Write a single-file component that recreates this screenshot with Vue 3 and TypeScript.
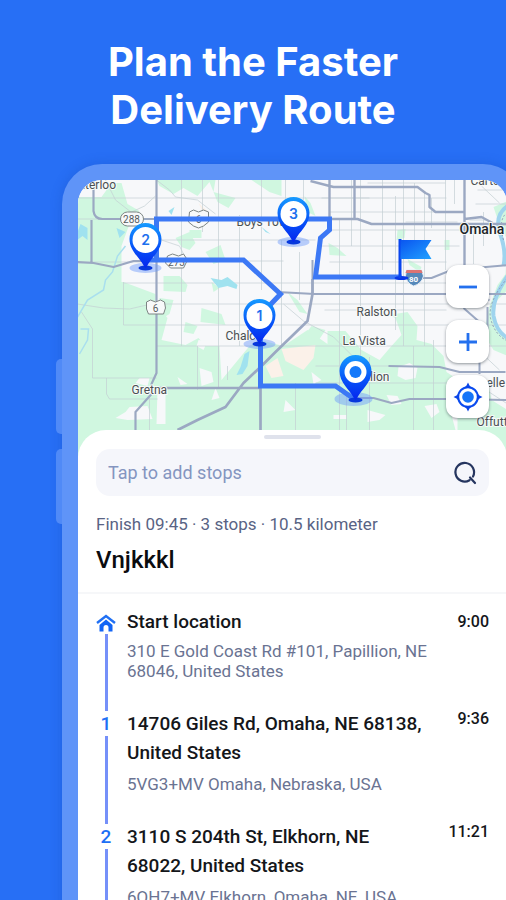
<script setup lang="ts">
import { ref } from 'vue'

interface Stop {
  marker: string
  title: string
  address: string
  time: string
}

interface Pin {
  x: number
  y: number
  label: string
}

const query = ref('')

const stops: Stop[] = [
  { marker: 'home', title: 'Start location', address: '310 E Gold Coast Rd #101, Papillion, NE 68046, United States', time: '9:00' },
  { marker: '1', title: '14706 Giles Rd, Omaha, NE 68138, United States', address: '5VG3+MV Omaha, Nebraska, USA', time: '9:36' },
  { marker: '2', title: '3110 S 204th St, Elkhorn, NE 68022, United States', address: '6QH7+MV Elkhorn, Omaha, NE, USA', time: '11:21' },
]

const pins: Pin[] = [
  { x: 146, y: 240, label: '2' },
  { x: 294, y: 214, label: '3' },
  { x: 260, y: 316, label: '1' },
  { x: 356, y: 372, label: '' },
]
</script>

<template>
  <main class="poster">
    <h1 class="headline">Plan the Faster<br />Delivery Route</h1>

    <div class="phone">
      <span class="side-key side-key-up"></span>
      <span class="side-key side-key-down"></span>
      <div class="screen">
        <section class="map-area" aria-label="Route map">
          <svg class="map" viewBox="78 180 430 276" preserveAspectRatio="xMidYMin slice">
            <defs>
              <linearGradient id="pinFill" x1="0" y1="0" x2="0" y2="1">
                <stop offset="0" stop-color="#169bff" />
                <stop offset="0.55" stop-color="#0752f8" />
                <stop offset="1" stop-color="#0525ee" />
              </linearGradient>
              <linearGradient id="flagFill" x1="0" y1="0" x2="1" y2="1">
                <stop offset="0" stop-color="#0a55f0" />
                <stop offset="1" stop-color="#21a1ff" />
              </linearGradient>
            </defs>
            <rect x="78" y="180" width="430" height="276" fill="#f7f8fa" />

            <g fill="#d0f7e0">
              <path d="M78 197H102L112 183H122L128 204 140 211 130 224 122 246V282H124L156 294V304L168 318 162 340 186 345 199 338 206 346H220L222 380 250 346 260 340 284 346 308 330 328 344V331H346L362 350 380 360 392 346 402 335 396 318 389 315 408 312 418 326 417 340 432 344 444 356 447 372 456 378 448 400 456 430 447 456H78Z" />
              <path d="M157 180H216L214 192 236 198 229 208 218 202 210 182 198 196 184 188 174 194 160 186Z" />
              <path d="M252 180H282V196L270 192 264 188Z" />
              <path d="M305 196L311 203 316 216 308 212ZM329 243L338 248 347 256 330 255ZM398 230L406 229 405 238 397 240ZM445 240H450V250H445ZM408 259L422 267 420 272 410 265Z" />
              <path d="M176 238L190 232 196 243 190 250 182 247ZM206 252L221 245 226 260 214 264ZM190 230H202V238H190ZM164 276H180L188 285 186 292 164 291ZM212 282L220 288 214 292Z" />
              <path d="M160 298L174 300 170 314 160 320ZM202 308L222 314 226 325 201 322ZM186 322 198 326 194 334 184 332ZM288 292 298 300 308 314 300 312ZM312 326 326 330 318 342 306 334Z" />
              <path d="M494 207L508 201V290L496 302 492 316 498 330 508 339V356L494 350 484 334 490 306 498 285 506 274 508 240 500 225Z" />
              <path d="M458 380H488L492 400 508 410V456H458Z" />
            </g>
            <g fill="#f7f8fa">
              <path d="M200 368L212 372 214 382 202 386ZM199 340 208 341 204 350 197 346ZM178 377L188 384 181 385ZM116 418L126 412 130 407 148 406 153 419 128 420ZM158 390H166V424H157ZM140 378H150L148 386 136 383ZM216 388 220 398 212 400Z" />
              <path d="M399 367L410 363 418 368 416 378 406 380 398 376ZM425 406L437 404 440 412 432 418ZM334 415H347V419H334ZM368 410L386 415 380 420 368 422ZM387 395 398 396 402 404 392 405ZM312 372 322 380 314 384ZM286 400 296 410 284 412ZM458 346 480 358 468 370 455 360Z" />
            </g>
            <g fill="#fbf1e9">
              <path d="M282 349L316 345 314 358 304 370 286 361ZM266 366L278 358 284 376 272 378ZM199 203 209 212 204 214Z" />
            </g>

            <g class="streets">
              <path d="M78 198H370M78 219H330M162 240H316M162 261H284M124 283H447M162 304H508M124 325H508M157 346H508M316 366H392M78 262H157M182 180V346M203 180V232M219 180V387M240 215V346M262 180V290M286 180V204M282 240V346M300 252V300M340 220V456M361 180V370M383 180V270M404 180V346M425 192V346M446 180V270M219 366V387M198 346V390" />
              <path d="M124 282V325M78 304L104 308 130 309 156 303M82 312L93 329V378H157M107 378V394L110 399H158M304 180V200M352 180V246M396 196V330M415 183V245M432 198V228M455 180V204M322 198H447M330 212H440M330 230H466M322 246H460M330 262H447M340 294H447M325 310H447M316 383H447M414 346V430M434 340V456M370 357V456M347 394V456M219 387V346M150 394V430M296 383V430M228 366V380M368 183H446M406 222H458" />
              <path d="M106 180L116 200 134 214 141 231M157 180 170 190 176 197 198 200 216 214M128 214 145 206 156 196M162 240 180 246 184 254M284 304 304 321 334 337 352 355M464 345 484 355 500 370M464 386H494M468 378 508 404M476 204H508M478 190H508M482 186 500 203M470 220H488M474 230V264M484 212V246" />
            </g>
            <g fill="none" stroke="#a9dfee" stroke-width="1.5">
              <path d="M126 246L118 256 113 272 106 280 104 290 88 300 78 317" />
              <path d="M81 329L89 329 88 340 80 354" />
            </g>
            <g fill="#a0e2ef">
              <path d="M81 224L88 228 88 240 83 236 78 240V232ZM117 228 126 232 120 238ZM169 211 175 207 172 215ZM211 278L222 280 228 277 233 281 238 285 237 289 228 286 219 288ZM245 354L250 351 248 366 243 374 237 375 241 367ZM262 227 271 234 266 232Z" />
            </g>
            <path d="M508 206Q494 216 501 235Q507 252 504 266M508 276Q492 299 494 316Q497 332 508 338" fill="none" stroke="#9fd4ee" stroke-width="4" />
            <path d="M508 212Q498 220 504 240M508 278Q488 302 491 318Q495 335 508 341" fill="none" stroke="#8b9cb9" stroke-width="1" stroke-dasharray="2 2" />

            <g class="highways">
              <path d="M94 180V211Q95 219 103 219H160M92 220V263M78 262L94 263 114 267 134 261H156M157 180V373L152 384V394L136 412V430" stroke-width="2.2" />
              <path d="M160 388H262M261 340V456M178 430L198 420 226 407 244 383 262 366 276 352 308 321 313 294V279" stroke-width="2.7" />
              <path d="M311 181L334 187H418L426 193 430 195V207L436 212H464M330 180V218M355 180V219M332 219H358L372 224H508M465 180V270M465 219 482 217 493 223" stroke-width="2.4" />
              <path d="M278 292L315 294H508M414 278H432L452 270 508 265M313 260V294M356 398H374L392 403 410 399H450M389 366 440 367 460 372H506M464 308 480 322V374M488 307V333M450 399 508 400M462 294 490 300" stroke-width="2" />
            </g>

            <g class="shields">
              <rect x="121" y="212" width="23" height="14" rx="7" />
              <path d="M190 212L194 210 199 212 204 210 209 212V222L204 226 199 228 194 226 189 222Z" />
              <path d="M168 256L173 254 179 256 184 254 188 260 184 268H171L166 263Z" />
              <path d="M147 302L151 300 156 302 161 300 165 302 166 308 164 314H149L147 309Z" />
              <g class="shield-text">
                <text x="132" y="223">288</text>
                <text x="199" y="223">6</text>
                <text x="177" y="266">273</text>
                <text x="156" y="312">6</text>
              </g>
            </g>
            <g class="places">
              <text x="79" y="189">aterloo</text>
              <text x="237" y="226">Boys Town</text>
              <text x="471" y="185">Carter</text>
              <text x="460" y="234" class="city">Omaha</text>
              <text x="357" y="316">Ralston</text>
              <text x="343" y="345">La Vista</text>
              <text x="344" y="381">Papillion</text>
              <text x="226" y="340">Chalco</text>
              <text x="132" y="394">Gretna</text>
              <text x="487" y="387">elle</text>
              <text x="477" y="426">Offutt</text>
            </g>

            <g fill="#6996fa" fill-opacity="0.45">
              <ellipse cx="146" cy="268" rx="16" ry="5" />
              <ellipse cx="294" cy="242" rx="16" ry="5" />
              <ellipse cx="260" cy="344" rx="16" ry="5" />
              <ellipse cx="354" cy="399" rx="19" ry="7" />
            </g>
            <path class="route" d="M146 260H244L281 294 261 315V386H336L356 400M157 260V219H330V230L321 238 316 277H402" />

            <g>
              <path d="M407 270H422L424 276Q422 284 414 286Q407 283 406 276Z" fill="#5689ba" stroke="#e4edf6" />
              <path d="M407 270H422L423 273H406Z" fill="#dc7373" />
              <text x="414" y="282" class="interstate">80</text>
            </g>

            <g>
              <ellipse cx="402" cy="278" rx="7" ry="2" fill="#0837e8" />
              <path d="M399 239H402V278H399Z" fill="#0845ef" />
              <path d="M401 240H432L426 249 432 259H401Z" fill="url(#flagFill)" />
            </g>

            <g v-for="pin in pins" :key="pin.label" :transform="`translate(${pin.x} ${pin.y})`">
              <ellipse cx="0" cy="28" rx="7" ry="2.5" fill="#0738dc" />
              <path d="M0-17C-9-17-16-10-16-1C-16 11-6 17-1 27Q0 29 1 27C6 17 16 11 16-1C16-10 9-17 0-17Z" fill="url(#pinFill)" />
              <circle :r="pin.label ? 13 : 11" cy="0" fill="#ffffff" />
              <text v-if="pin.label" y="5" class="pin-label">{{ pin.label }}</text>
              <circle v-else r="6" fill="#1479fa" />
            </g>
          </svg>

          <div class="map-controls">
            <button type="button" class="map-button" aria-label="Zoom out">
              <svg viewBox="0 0 24 24"><path d="M3 12H21" stroke="#2470ee" stroke-width="2.8" /></svg>
            </button>
            <button type="button" class="map-button" aria-label="Zoom in">
              <svg viewBox="0 0 24 24"><path d="M3 12H21M12 3V21" stroke="#2470ee" stroke-width="2.8" /></svg>
            </button>
            <button type="button" class="map-button" aria-label="My location">
              <svg class="locate" viewBox="0 0 30 30">
                <circle cx="15" cy="15" r="9.8" fill="none" stroke="#0a4cf0" stroke-width="2" />
                <circle cx="15" cy="15" r="5.8" fill="#1675f8" />
                <path d="M15 0.5L16.5 3.5 19 6H11L13.5 3.5ZM15 29.5L13.5 26.5 11 24H19L16.5 26.5ZM0.5 15L3.5 13.5 6 11V19L3.5 16.5ZM29.5 15L26.5 16.5 24 19V11L26.5 13.5Z" fill="#0a45e8" />
              </svg>
            </button>
          </div>
        </section>

        <section class="sheet">
          <div class="handle"></div>
          <label class="search">
            <input v-model="query" type="text" placeholder="Tap to add stops" aria-label="Tap to add stops" />
            <svg class="search-icon" viewBox="0 0 24 24" fill="none" stroke="#25355f" stroke-width="2.2">
              <path d="M16.5 19.2A9.3 9.3 0 1 1 20 15.5M17 16.5L22 22" stroke-linecap="round" />
            </svg>
          </label>
          <header class="summary">
            <p class="meta">Finish 09:45 · 3 stops · 10.5 kilometer</p>
            <h2 class="route-name">Vnjkkkl</h2>
          </header>
          <ol class="timeline">
            <li v-for="stop in stops" :key="stop.marker" class="stop" :class="{ 'stop-start': stop.marker === 'home' }">
              <div class="rail">
                <span class="marker">
                  <svg v-if="stop.marker === 'home'" viewBox="0 0 20 18" class="home-icon">
                    <path d="M1 9L10 2L19 9" fill="none" stroke="#2070f4" stroke-width="2.4" />
                    <path d="M10 5.5L16.5 11V17.5H12.5V13.5A2.5 2.5 0 0 0 7.5 13.5V17.5H3.5V11Z" fill="#1265f5" />
                  </svg>
                  <template v-else>{{ stop.marker }}</template>
                </span>
                <span class="line"></span>
              </div>
              <div class="stop-body">
                <h3 class="stop-title">{{ stop.title }}</h3>
                <p class="stop-address">{{ stop.address }}</p>
              </div>
              <time class="stop-time">{{ stop.time }}</time>
            </li>
          </ol>
        </section>
      </div>
    </div>
  </main>
</template>

<style>
body {
  margin: 0;
  background: #276ff5;
}
</style>

<style scoped>
.poster {
  box-sizing: border-box;
  height: 100vh;
  overflow: hidden;
  padding-top: 38px;
  background: #276ff5;
  font-family: Roboto, "Liberation Sans", sans-serif;
}

.headline {
  margin: 0;
  color: #ffffff;
  font-family: Inter, Roboto, sans-serif;
  font-size: 40px;
  font-weight: 700;
  line-height: 48px;
  text-align: center;
}

.phone {
  position: relative;
  margin: 30px -17px 0 62px;
  padding: 16px 16px 0;
  border-radius: 40px 40px 0 0;
  background: #5f94f8;
  box-shadow: 0 0 12px rgba(20, 70, 180, 0.3);
}

.side-key {
  position: absolute;
  left: -6px;
  width: 6px;
  height: 75px;
  border-radius: 5px 0 0 5px;
  background: #508af7;
}

.side-key-up {
  top: 195px;
}

.side-key-down {
  top: 285px;
}

.screen {
  overflow: hidden;
  border-radius: 24px 24px 0 0;
  background: #ffffff;
}

.map-area {
  position: relative;
  height: 276px;
}

.map {
  display: block;
  width: 100%;
  height: 100%;
}

.streets {
  fill: none;
  stroke: #c3ced3;
  stroke-opacity: 0.7;
  stroke-width: 1;
}

.highways {
  fill: none;
  stroke: #9ba8c2;
  stroke-linejoin: round;
}

.shields {
  fill: #f8f9fa;
  stroke: #7d8584;
  stroke-width: 1;
}

.shield-text {
  fill: #555b5e;
  stroke: none;
  font-size: 10px;
  text-anchor: middle;
}

.places {
  fill: #4a4e52;
  stroke: #f7faf9;
  stroke-width: 2;
  paint-order: stroke;
  font-size: 12px;
}

.city {
  fill: #202428;
  font-size: 14px;
  font-weight: 500;
}

.route {
  fill: none;
  stroke: #3c78f5;
  stroke-width: 5;
}

.interstate {
  fill: #ffffff;
  font-size: 8px;
  font-weight: 700;
  text-anchor: middle;
}

.pin-label {
  fill: #1d70ee;
  font-family: Inter, sans-serif;
  font-size: 14px;
  font-weight: 600;
  text-anchor: middle;
}

.map-controls {
  position: absolute;
  top: 85px;
  right: 18px;
  display: flex;
  flex-direction: column;
  gap: 12px;
}

.map-button {
  display: flex;
  align-items: center;
  justify-content: center;
  width: 43px;
  height: 43px;
  padding: 0;
  border: 0;
  border-radius: 12px;
  background: #ffffff;
  box-shadow: 0 1px 3px rgba(40, 50, 60, 0.5);
}

.map-button svg {
  width: 24px;
  height: 24px;
}

.map-button .locate {
  width: 30px;
  height: 30px;
}

.sheet {
  position: relative;
  margin-top: -26px;
  padding-top: 5px;
  border-radius: 28px 28px 0 0;
  background: #ffffff;
}

.handle {
  width: 57px;
  height: 4px;
  margin: 0 auto 10px;
  border-radius: 2px;
  background: #dfe2ec;
}

.search {
  display: flex;
  align-items: center;
  height: 47px;
  margin: 0 18px;
  padding: 0 12px;
  border-radius: 14px;
  background: #f5f6fb;
}

.search input {
  flex: 1;
  min-width: 0;
  padding: 0;
  border: 0;
  outline: 0;
  background: transparent;
  color: #25355f;
  font-family: inherit;
  font-size: 18px;
}

.search input::placeholder {
  color: #8495c0;
  opacity: 1;
}

.search-icon {
  width: 24px;
  height: 24px;
}

.summary {
  padding: 18px 18px 16px;
  border-bottom: 2px solid #f6f7f9;
}

.meta {
  margin: 0;
  color: #596384;
  font-size: 17px;
  line-height: 20px;
}

.route-name {
  margin: 10px 0 0;
  color: #0b0c0f;
  font-size: 24px;
  font-weight: 500;
  line-height: 32px;
}

.timeline {
  margin: 0;
  padding: 16px 18px 0;
  list-style: none;
}

.stop {
  display: grid;
  grid-template-columns: 20px 1fr 44px;
  column-gap: 11px;
}

.rail {
  display: flex;
  flex-direction: column;
  align-items: center;
}

.marker {
  display: flex;
  align-items: center;
  height: 29px;
  color: #1e6ff5;
  font-size: 19px;
  font-weight: 500;
}

.home-icon {
  width: 20px;
  height: 18px;
}

.line {
  flex: 1;
  width: 3px;
  margin: -2px 0;
  background: #7590f9;
}

.stop-body {
  padding-bottom: 28px;
}

.stop-title {
  margin: 0 0 7px;
  padding-right: 6px;
  color: #14161a;
  font-size: 19px;
  font-weight: 500;
  line-height: 29px;
}

.stop-address {
  margin: 0;
  color: #6a7392;
  font-size: 17px;
  line-height: 20px;
}

.stop-time {
  color: #14161a;
  font-size: 16px;
  font-weight: 500;
  line-height: 20px;
  text-align: right;
}

.stop-start .stop-title,
.stop-start .stop-time {
  line-height: 24px;
}

.stop-start .marker {
  height: 26px;
}
</style>
